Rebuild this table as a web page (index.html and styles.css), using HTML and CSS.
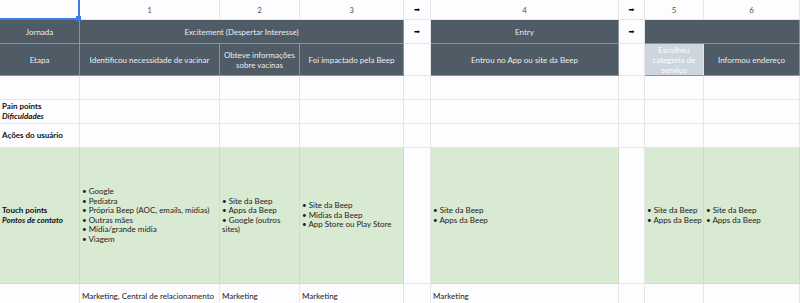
FILE: index.html
```html
<!DOCTYPE html>
<html lang="pt">
<head>
	<meta charset="UTF-8">
	<title>Jornada do usuário</title>
	<link rel="stylesheet" href="styles.css">
</head>
<body>
	<div class="sheet">
		<!-- linha 1: cabeçalho das colunas -->
		<div class="cell top corner"><span class="handle"></span></div>
		<div class="cell top">1</div>
		<div class="cell top">2</div>
		<div class="cell top">3</div>
		<div class="cell top arrow">&#10145;</div>
		<div class="cell top">4</div>
		<div class="cell top arrow">&#10145;</div>
		<div class="cell top">5</div>
		<div class="cell top">6</div>

		<!-- Jornada -->
		<div class="cell dark center">Jornada</div>
		<div class="cell dark center span3">Excitement (Despertar Interesse)</div>
		<div class="cell arrow">&#10145;</div>
		<div class="cell dark center">Entry</div>
		<div class="cell arrow">&#10145;</div>
		<div class="cell dark span2"></div>

		<!-- Etapa -->
		<div class="cell dark center">Etapa</div>
		<div class="cell dark center">Identificou necessidade de vacinar</div>
		<div class="cell dark center">Obteve informações sobre vacinas</div>
		<div class="cell dark center">Foi impactado pela Beep</div>
		<div class="cell"></div>
		<div class="cell dark center">Entrou no App ou site da Beep</div>
		<div class="cell"></div>
		<div class="cell light center">Escolheu categoria de serviço</div>
		<div class="cell dark center">Informou endereço</div>

		<!-- linha vazia -->
		<div class="cell"></div><div class="cell"></div><div class="cell"></div>
		<div class="cell"></div><div class="cell"></div><div class="cell"></div>
		<div class="cell"></div><div class="cell"></div><div class="cell"></div>

		<!-- Pain points -->
		<div class="cell label"><b>Pain points</b><i>Dificuldades</i></div>
		<div class="cell"></div><div class="cell"></div><div class="cell"></div>
		<div class="cell"></div><div class="cell"></div><div class="cell"></div>
		<div class="cell"></div><div class="cell"></div>

		<!-- Ações -->
		<div class="cell label"><b>Ações do usuário</b></div>
		<div class="cell"></div><div class="cell"></div><div class="cell"></div>
		<div class="cell"></div><div class="cell"></div><div class="cell"></div>
		<div class="cell"></div><div class="cell"></div>

		<!-- Touch points -->
		<div class="cell green label"><b>Touch points</b><i>Pontos de contato</i></div>
		<div class="cell green list">• Google
• Pediatra
• Própria Beep (AOC, emails, mídias)
• Outras mães
• Mídia/grande mídia
• Viagem</div>
		<div class="cell green list">• Site da Beep
• Apps da Beep
• Google (outros sites)</div>
		<div class="cell green list">• Site da Beep
• Mídias da Beep
• App Store ou Play Store</div>
		<div class="cell"></div>
		<div class="cell green list">• Site da Beep
• Apps da Beep</div>
		<div class="cell"></div>
		<div class="cell green list nowrap">• Site da Beep
• Apps da Beep</div>
		<div class="cell green list">• Site da Beep
• Apps da Beep</div>

		<!-- Áreas -->
		<div class="cell"></div>
		<div class="cell text nowrap">Marketing, Central de relacionamento</div>
		<div class="cell text">Marketing</div>
		<div class="cell text">Marketing</div>
		<div class="cell"></div>
		<div class="cell text">Marketing</div>
		<div class="cell"></div>
		<div class="cell"></div>
		<div class="cell"></div>
	</div>
</body>
</html>
```

FILE: styles.css
```css
*{
	margin: 0;
	padding: 0;
	box-sizing: border-box;
}
body{
	background-color: #fdfcfe;
	font-family: Lato, "Noto Sans", sans-serif;
	font-size: 8px;
	color: #333;
	overflow: hidden;
}
.sheet{
	display: grid;
	grid-template-columns: 80px 140px 80px 104px 27px 188px 26px 59px 96px;
	grid-template-rows: 20px 24px 32px 24px 24px 24px 136px 24px;
	width: 800px;
}
.cell{
	border-right: 1px solid #e6e5e8;
	border-bottom: 1px solid #e6e5e8;
	display: flex;
	align-items: center;
	min-width: 0;
}
.top{
	justify-content: center;
	color: #555;
	background-color: #fdfcfe;
}
.corner{
	position: relative;
	border-right: 2px solid #3b7de0;
	border-bottom: 2px solid #3b7de0;
}
.corner .handle{
	position: absolute;
	right: -3px;
	bottom: -3px;
	width: 5px;
	height: 5px;
	background-color: #3b7de0;
}
.arrow{
	justify-content: center;
	font-family: "DejaVu Sans", sans-serif;
	font-size: 7px;
	color: #000;
}
.dark{
	background-color: #4f5b65;
	color: #e9edf0;
	border-right-color: #8a949c;
	border-bottom-color: #8a949c;
}
.light{
	background-color: #cdd6de;
	color: #fff;
	border-bottom-color: #8a949c;
}
.center{
	justify-content: center;
	text-align: center;
	line-height: 10px;
	padding: 0 4px;
}
.span3{
	grid-column: span 3;
}
.span2{
	grid-column: span 2;
}
.label{
	flex-direction: column;
	align-items: flex-start;
	justify-content: center;
	padding-left: 2px;
	color: #111;
	line-height: 9.5px;
}
.label i{
	font-weight: bold;
}
.green{
	background-color: #d9ead3;
	border-right-color: #cfdcc9;
	border-bottom-color: #cfdcc9;
}
.list{
	white-space: pre-line;
	line-height: 9.5px;
	padding-left: 2px;
	color: #222;
}
.text{
	padding-left: 2px;
	color: #222;
}
.nowrap{
	white-space: pre;
}
```
